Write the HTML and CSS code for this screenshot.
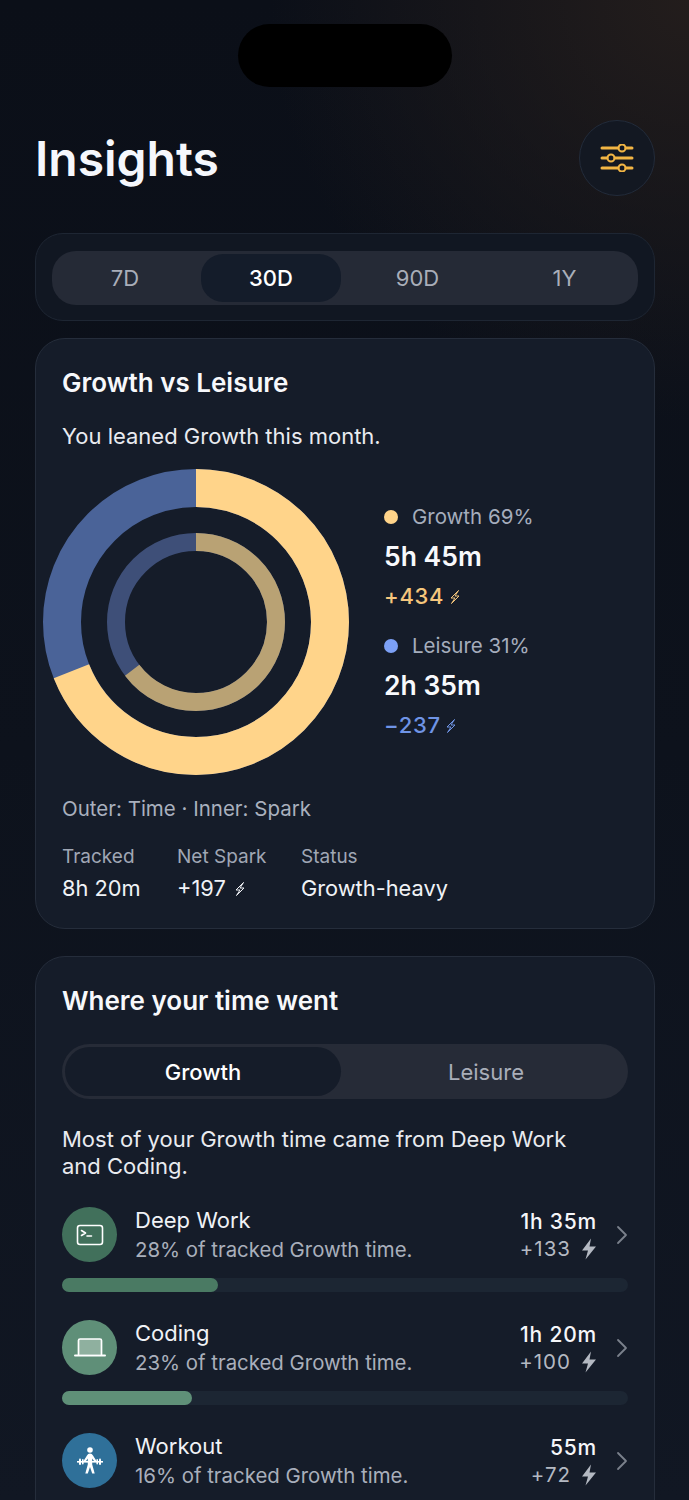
FILE: index.html
```html
<!DOCTYPE html>
<html lang="en">
<head>
  <meta charset="UTF-8" />
  <meta name="viewport" content="width=device-width, initial-scale=1.0"/>
  <title>Insights</title>
  <link rel="stylesheet" href="styles.css">
</head>
<body>

<div class="app">
  <div class="island"></div>

  <header class="top-bar">
    <h1 class="page-title">Insights</h1>
    <button class="filter-btn" aria-label="Filters">
      <svg width="34" height="28" viewBox="0 0 34 28" fill="none" stroke="#f2b544" stroke-width="3" stroke-linecap="round">
        <path d="M2 4H18M26 4H32M2 14H7M15 14H32M2 24H18M26 24H32"/>
        <circle cx="22" cy="4" r="3.500" stroke-width="2"/>
        <circle cx="11" cy="14" r="3.500" stroke-width="2"/>
        <circle cx="22" cy="24" r="3.500" stroke-width="2"/>
      </svg>
    </button>
  </header>

  <section class="range-card">
    <div class="range-tabs">
      <div class="range-tab">7D</div>
      <div class="range-tab active">30D</div>
      <div class="range-tab">90D</div>
      <div class="range-tab">1Y</div>
    </div>
  </section>

  <section class="card balance-card">
    <h2 class="card-title">Growth vs Leisure</h2>
    <p class="lead">You leaned Growth this month.</p>

    <div class="chart-row">
      <svg class="donut" width="306" height="306" viewBox="0 0 306 306" fill="none">
        <g transform="rotate(-90 153 153)">
          <circle cx="153" cy="153" r="134" stroke="#4a6398" stroke-width="38"/>
          <circle cx="153" cy="153" r="134" stroke="#ffd48a" stroke-width="38" pathLength="100" stroke-dasharray="69 31"/>
          <circle cx="153" cy="153" r="80" stroke="#3e4f78" stroke-width="18"/>
          <circle cx="153" cy="153" r="80" stroke="#b9a274" stroke-width="18" pathLength="100" stroke-dasharray="64.7 35.3"/>
        </g>
      </svg>

      <div class="legend">
        <div class="legend-item">
          <div class="legend-label"><span class="dot dot-growth"></span>Growth 69%</div>
          <div class="legend-time">5h 45m</div>
          <div class="legend-spark spark-growth">+434
            <svg class="bolt-thin" width="12" height="16" viewBox="0 0 12 16" fill="none" stroke="currentColor" stroke-width="1" stroke-linejoin="round"><path d="M9.500 1.500L2 9H6L2.500 14.500L10 7H6Z"/></svg>
          </div>
        </div>
        <div class="legend-item">
          <div class="legend-label"><span class="dot dot-leisure"></span>Leisure 31%</div>
          <div class="legend-time">2h 35m</div>
          <div class="legend-spark spark-leisure">−237
            <svg class="bolt-thin" width="12" height="16" viewBox="0 0 12 16" fill="none" stroke="currentColor" stroke-width="1" stroke-linejoin="round"><path d="M9.500 1.500L2 9H6L2.500 14.500L10 7H6Z"/></svg>
          </div>
        </div>
      </div>
    </div>

    <p class="chart-note">Outer: Time · Inner: Spark</p>

    <div class="stats">
      <div class="stat stat-tracked">
        <div class="stat-label">Tracked</div>
        <div class="stat-value">8h 20m</div>
      </div>
      <div class="stat stat-net">
        <div class="stat-label">Net Spark</div>
        <div class="stat-value">+197
          <svg class="bolt-thin" width="12" height="16" viewBox="0 0 12 16" fill="none" stroke="currentColor" stroke-width="1" stroke-linejoin="round"><path d="M9.500 1.500L2 9H6L2.500 14.500L10 7H6Z"/></svg>
        </div>
      </div>
      <div class="stat">
        <div class="stat-label">Status</div>
        <div class="stat-value">Growth-heavy</div>
      </div>
    </div>
  </section>

  <section class="card time-card">
    <h2 class="card-title">Where your time went</h2>

    <div class="segment">
      <div class="segment-tab active">Growth</div>
      <div class="segment-tab">Leisure</div>
    </div>

    <p class="lead summary">Most of your Growth time came from Deep Work and Coding.</p>

    <div class="activity">
      <div class="activity-row">
        <div class="activity-icon icon-deep">
          <svg width="28" height="22" viewBox="0 0 28 22" fill="none" stroke="#fff" stroke-width="1.600" stroke-linecap="round" stroke-linejoin="round">
            <rect x="1.500" y="1.500" width="25" height="19" rx="2.500"/>
            <path d="M5.500 6.500L9.500 9L5.500 11.500M11 12H15.500"/>
          </svg>
        </div>
        <div class="activity-text">
          <div class="activity-name">Deep Work</div>
          <div class="activity-sub">28% of tracked Growth time.</div>
        </div>
        <div class="activity-nums">
          <div class="activity-time">1h 35m</div>
          <div class="activity-spark">+133
            <svg class="bolt" width="16" height="22" viewBox="0 0 16 22"><path d="M10 0.500L1 12.500H7L4.500 21.500L15 8.500H8.500Z" fill="#b4b9c2"/></svg>
          </div>
        </div>
        <svg class="chevron" width="12" height="20" viewBox="0 0 12 20" fill="none" stroke="#7b818c" stroke-width="1.800" stroke-linecap="round" stroke-linejoin="round"><path d="M2 2L10 10L2 18"/></svg>
      </div>
      <div class="bar-track"><div class="bar-fill fill-deep" style="width: 27.6%"></div></div>
    </div>

    <div class="activity">
      <div class="activity-row">
        <div class="activity-icon icon-coding">
          <svg width="32" height="20" viewBox="0 0 32 20" fill="none" stroke="#fff" stroke-width="1.700" stroke-linecap="round" stroke-linejoin="round">
            <path d="M4.500 16.500V2.500C4.500 1.700 5.200 1 6 1H26C26.800 1 27.500 1.700 27.500 2.500V16.500" fill="#8fb09f"/>
            <path d="M1 17.500H31" stroke-width="2"/>
          </svg>
        </div>
        <div class="activity-text">
          <div class="activity-name">Coding</div>
          <div class="activity-sub">23% of tracked Growth time.</div>
        </div>
        <div class="activity-nums">
          <div class="activity-time">1h 20m</div>
          <div class="activity-spark">+100
            <svg class="bolt" width="16" height="22" viewBox="0 0 16 22"><path d="M10 0.500L1 12.500H7L4.500 21.500L15 8.500H8.500Z" fill="#b4b9c2"/></svg>
          </div>
        </div>
        <svg class="chevron" width="12" height="20" viewBox="0 0 12 20" fill="none" stroke="#7b818c" stroke-width="1.800" stroke-linecap="round" stroke-linejoin="round"><path d="M2 2L10 10L2 18"/></svg>
      </div>
      <div class="bar-track"><div class="bar-fill fill-coding" style="width: 23%"></div></div>
    </div>

    <div class="activity">
      <div class="activity-row">
        <div class="activity-icon icon-workout">
          <svg width="26" height="27" viewBox="0 0 26 27" fill="#fff">
            <circle cx="13" cy="3" r="2.800"/>
            <path d="M13 6.500C11.500 6.500 10.800 7.200 10 8.500L6.500 14H9L10.800 11.500V17.500L8.300 26.500H10.800L13 20L15.200 26.500H17.700L15.200 17.500V11.500L17 14H19.500L16 8.500C15.200 7.200 14.500 6.500 13 6.500Z"/>
            <rect x="0" y="14" width="26" height="1.600"/>
            <rect x="2" y="11.500" width="2" height="6.500" rx="1"/>
            <rect x="5" y="12" width="1.600" height="5.500" rx="0.800"/>
            <rect x="22" y="11.500" width="2" height="6.500" rx="1"/>
            <rect x="19.400" y="12" width="1.600" height="5.500" rx="0.800"/>
          </svg>
        </div>
        <div class="activity-text">
          <div class="activity-name">Workout</div>
          <div class="activity-sub">16% of tracked Growth time.</div>
        </div>
        <div class="activity-nums">
          <div class="activity-time">55m</div>
          <div class="activity-spark">+72
            <svg class="bolt" width="16" height="22" viewBox="0 0 16 22"><path d="M10 0.500L1 12.500H7L4.500 21.500L15 8.500H8.500Z" fill="#b4b9c2"/></svg>
          </div>
        </div>
        <svg class="chevron" width="12" height="20" viewBox="0 0 12 20" fill="none" stroke="#7b818c" stroke-width="1.800" stroke-linecap="round" stroke-linejoin="round"><path d="M2 2L10 10L2 18"/></svg>
      </div>
    </div>
  </section>
</div>

</body>
</html>
```

FILE: styles.css
```css
* { box-sizing: border-box; margin: 0; padding: 0; }
html, body {
  height: 1500px;
  overflow: hidden;
}
body {
  font-family: Inter, 'Noto Sans', sans-serif;
  color: #f4f6fa;
  background: #0c1019;
}
.app {
  height: 1500px;
  overflow: hidden;
  padding: 24px 34px 0 35px;
  background:
    radial-gradient(circle at 100% 0, #231d1c 0, rgba(35, 29, 28, 0) 420px),
    linear-gradient(180deg, #0b0f18 0%, #0d121c 50%, #111723 100%);
}
.island {
  width: 214px;
  height: 63px;
  margin: 0 auto;
  border-radius: 32px;
  background: #000;
}

/* header */
.top-bar {
  display: flex;
  align-items: center;
  justify-content: space-between;
  height: 76px;
  margin-top: 33px;
}
.page-title {
  font-size: 48px;
  font-weight: 600;
  color: #f5f7fc;
}
.filter-btn {
  display: flex;
  align-items: center;
  justify-content: center;
  width: 76px;
  height: 76px;
  border: 1px solid #222b3a;
  border-radius: 50%;
  background: #131822;
}

/* range picker */
.range-card {
  height: 88px;
  margin-top: 37px;
  padding: 17px 16px 0;
  border: 1px solid #1e2633;
  border-radius: 28px;
  background: #111722;
}
.range-tabs {
  display: grid;
  grid-template-columns: 146px 146px 147px 147px;
  height: 54px;
  padding: 3px 0;
  border-radius: 24px;
  background: #252a36;
}
.range-tab {
  display: flex;
  align-items: center;
  justify-content: center;
  font-size: 22px;
  color: #a9aeb9;
}
.range-tab.active {
  margin: 0 3px;
  border-radius: 22px;
  background: #141c2a;
  color: #fff;
  font-weight: 500;
}

/* cards */
.card {
  margin-top: 17px;
  padding: 0 26px;
  border: 1px solid #252d3b;
  border-radius: 30px;
  background: #151c29;
}
.balance-card {
  height: 591px;
}
.time-card {
  margin-top: 27px;
  height: 600px;
}
.card-title {
  padding-top: 27px;
  font-size: 26px;
  line-height: 34px;
  font-weight: 600;
  color: #f7f8fb;
}
.lead {
  margin-top: 22px;
  font-size: 22px;
  line-height: 29px;
  color: #e9ebf0;
}

/* donut + legend */
.chart-row {
  display: flex;
  margin: 18px 0 0 -19px;
}
.donut {
  flex: none;
}
.legend {
  margin-left: 35px;
  padding-top: 34px;
}
.legend-item + .legend-item {
  margin-top: 21px;
}
.legend-label {
  display: flex;
  align-items: center;
  font-size: 20.500px;
  line-height: 28px;
  color: #a5adbc;
}
.dot {
  width: 14px;
  height: 14px;
  margin-right: 14px;
  border-radius: 50%;
}
.dot-growth { background: #ffd48a; }
.dot-leisure { background: #7ca0f5; }
.legend-time {
  margin-top: 8px;
  font-size: 26.500px;
  line-height: 34px;
  font-weight: 600;
  color: #f8f9fc;
}
.legend-spark {
  margin-top: 8px;
  font-size: 22px;
  line-height: 30px;
  font-weight: 500;
  letter-spacing: 0.700px;
}
.spark-growth { color: #f5c67c; }
.spark-leisure { color: #6f94e6; }
.bolt-thin {
  margin-left: 2px;
  vertical-align: -1px;
}
.legend-spark .bolt-thin {
  margin-left: -2px;
}

/* summary stats */
.chart-note {
  margin-top: 20px;
  font-size: 20.500px;
  line-height: 28px;
  color: #a9b0be;
}
.stats {
  display: flex;
  margin-top: 20px;
}
.stat-tracked { width: 115px; }
.stat-net { width: 124px; }
.stat-label {
  font-size: 19px;
  line-height: 28px;
  color: #a0a7b5;
}
.stat-value {
  margin-top: 2px;
  font-size: 21.800px;
  line-height: 30px;
  color: #f0f2f6;
}

/* growth / leisure switch */
.segment {
  display: grid;
  grid-template-columns: 276px 1fr;
  height: 55px;
  margin-top: 26px;
  padding: 3px;
  border-radius: 28px;
  background: #262b37;
}
.segment-tab {
  display: flex;
  align-items: center;
  justify-content: center;
  padding-left: 6px;
  font-size: 22px;
  color: #a9aeb9;
}
.segment-tab.active {
  padding-left: 0;
  border-radius: 25px;
  background: #151c29;
  color: #fff;
  font-weight: 500;
}
.summary {
  max-width: 540px;
  margin-top: 27px;
  margin-bottom: 27px;
  font-size: 22px;
  line-height: 27px;
}

/* activity list */
.activity {
  margin-top: 13px;
  height: 100px;
}
.activity-row {
  display: flex;
  align-items: center;
  height: 55px;
}
.activity-icon {
  display: flex;
  align-items: center;
  justify-content: center;
  flex: none;
  width: 55px;
  height: 55px;
  border-radius: 50%;
}
.icon-deep { background: #41705b; }
.icon-coding { background: #5f8f78; }
.icon-workout { background: #2f7099; }
.activity-text {
  flex: 1;
  margin-left: 18px;
}
.activity-name {
  font-size: 22px;
  line-height: 29px;
  color: #f0f2f6;
}
.activity-sub {
  font-size: 20.400px;
  line-height: 29px;
  color: #a9afbb;
}
.activity-nums {
  text-align: right;
}
.activity-time {
  font-size: 21px;
  line-height: 28px;
  font-weight: 500;
  letter-spacing: 0.800px;
  color: #f5f6f9;
}
.activity-spark {
  display: flex;
  align-items: center;
  justify-content: flex-end;
  gap: 10px;
  font-size: 20.500px;
  line-height: 26px;
  letter-spacing: 1px;
  color: #b4b9c2;
}
.chevron {
  flex: none;
  margin-left: 19px;
}
.bar-track {
  height: 14px;
  margin-top: 16px;
  border-radius: 7px;
  background: #1c2633;
}
.bar-fill {
  height: 100%;
  border-radius: 7px;
}
.fill-deep { background: #4a7a63; }
.fill-coding { background: #5f9078; }
```
